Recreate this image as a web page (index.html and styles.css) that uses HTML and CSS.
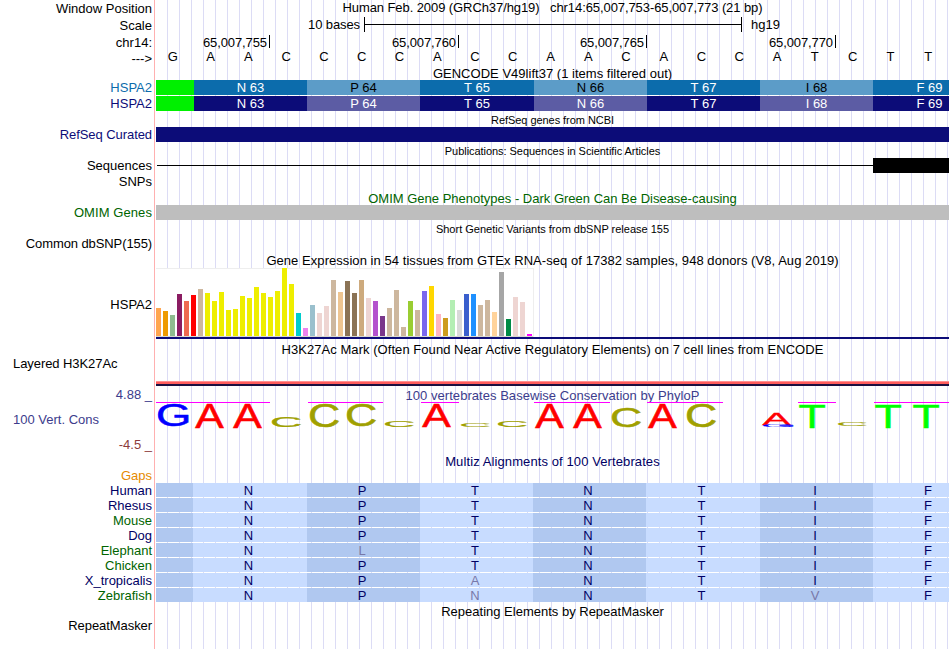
FILE: index.html
```html
<!DOCTYPE html>
<html lang="en">
<head>
    <meta charset="UTF-8">
    <meta name="viewport" content="width=device-width, initial-scale=1.0">
    <title>Human chr14:65,007,753-65,007,773</title>
    <link rel="stylesheet" href="styles.css">
</head>
<body>
    <div class="browser">
        <!-- Left labels -->
        <div class="labels">
            <div class="label window">Window Position</div>
            <div class="label scale-label">Scale</div>
            <div class="label chrom">chr14:</div>
            <div class="label">---&gt;</div>
            <div class="label gencode-top blue">HSPA2</div>
            <div class="label h16 navy">HSPA2</div>
            <div class="label refseq navy">RefSeq Curated</div>
            <div class="label seqs">Sequences</div>
            <div class="label h16">SNPs</div>
            <div class="label omim green">OMIM Genes</div>
            <div class="label dbsnp">Common dbSNP(155)</div>
            <div class="label gtex-label">HSPA2</div>
            <div class="label left h3k">Layered H3K27Ac</div>
            <div class="label cons-max">4.88 _</div>
            <div class="label left cons-name">100 Vert. Cons</div>
            <div class="label cons-min">-4.5 _</div>
            <div class="label gaps">Gaps</div>
            <div class="label navy2">Human</div>
            <div class="label navy2">Rhesus</div>
            <div class="label green">Mouse</div>
            <div class="label navy2">Dog</div>
            <div class="label green">Elephant</div>
            <div class="label green">Chicken</div>
            <div class="label navy2">X_tropicalis</div>
            <div class="label green">Zebrafish</div>
            <div class="label repeat">RepeatMasker</div>
        </div>

        <!-- Track images -->
        <div class="tracks">
            <div class="title position">Human Feb. 2009 (GRCh37/hg19)&nbsp;&nbsp; chr14:65,007,753-65,007,773 (21 bp)</div>
            <div class="scale">
                <span class="scale-text">10 bases</span>
                <span class="scale-bar"></span>
                <span>hg19</span>
            </div>
            <div class="ruler">
                <span class="tick first">65,007,755</span>
                <span class="tick">65,007,760</span>
                <span class="tick short">65,007,765</span>
                <span class="tick">65,007,770</span>
            </div>
            <div class="bases" id="bases"></div>

            <div class="title gencode">GENCODE V49lift37 (1 items filtered out)</div>
            <div class="codons light-blue">
                <span class="start"></span><span>N 63</span><span>P 64</span><span>T 65</span><span>N 66</span><span>T 67</span><span>I 68</span><span>F 69</span>
            </div>
            <div class="codons dark-blue">
                <span class="start"></span><span>N 63</span><span>P 64</span><span>T 65</span><span>N 66</span><span>T 67</span><span>I 68</span><span>F 69</span>
            </div>

            <div class="title small refseq-title">RefSeq genes from NCBI</div>
            <div class="bar navy-bar"></div>
            <div class="title small">Publications: Sequences in Scientific Articles</div>
            <div class="sequence"><span class="thin"></span><span class="block"></span></div>
            <div class="title omim-title green">OMIM Gene Phenotypes - Dark Green Can Be Disease-causing</div>
            <div class="bar gray-bar"></div>
            <div class="title small variants">Short Genetic Variants from dbSNP release 155</div>
            <div class="title gtex-title">Gene Expression in 54 tissues from GTEx RNA-seq of 17382 samples, 948 donors (V8, Aug 2019)</div>
            <div class="gtex" id="gtex"></div>
            <div class="gene-line"></div>

            <div class="title h3k-title">H3K27Ac Mark (Often Found Near Active Regulatory Elements) on 7 cell lines from ENCODE</div>
            <div class="h3k-band"></div>
            <div class="title cons-title">100 vertebrates Basewise Conservation by PhyloP</div>
            <svg class="logo" id="logo" width="793" height="52" viewBox="156 402 793 52"></svg>

            <div class="title multiz-title navy2">Multiz Alignments of 100 Vertebrates</div>
            <div class="multiz" id="multiz"></div>
            <div class="title repeat-title">Repeating Elements by RepeatMasker</div>
        </div>
    </div>
    <script src="script.js"></script>
</body>
</html>
```

FILE: styles.css
```css
body {
    margin: 0;
    background-color: white;
    color: black;
    font-family: "Liberation Sans", Arial, Helvetica, sans-serif;
    font-size: 13px;
}

.browser {
    display: flex;
    width: 950px;
    height: 649px;
    overflow: hidden;
}

/* Left labels */
.labels {
    width: 154px;
    border-right: 1px solid #ffb0b0;
    margin-right: 1px;
    flex-shrink: 0;
}

.label {
    height: 15px;
    line-height: 15px;
    padding-right: 2px;
    text-align: right;
    white-space: nowrap;
}

.label.left {
    text-align: left;
    padding-left: 13px;
}

.h16 { height: 16px; line-height: 16px; }
.window { height: 16px; line-height: 17px; }
.scale-label { height: 17px; line-height: 19px; }
.chrom { padding-top: 1px; height: 17px; line-height: 17px; }
.gencode-top { padding-top: 14px; height: 16px; }
.refseq { padding-top: 15px; letter-spacing: -0.07px; }
.seqs { padding-top: 16px; height: 16px; line-height: 16px; }
.omim { padding-top: 15px; letter-spacing: 0.08px; }
.dbsnp { padding-top: 16px; letter-spacing: -0.1px; }
.gtex-label { padding-top: 46px; }
.h3k { padding-top: 44px; letter-spacing: -0.07px; }
.cons-max { padding-top: 16px; color: #3c3c8c; }
.cons-name { padding-top: 10px; color: #3c3c8c; }
.cons-min { padding-top: 10px; color: #8c3c3c; }
.gaps { padding-top: 16px; color: #e68a00; }
.repeat { padding-top: 15px; letter-spacing: -0.07px; }

.blue { color: #0c6cac; }
.navy { color: #0c0c78; }
.navy2 { color: #000064; }
.green { color: #006400; }

/* Tracks, with a guide line every 12px */
.tracks {
    width: 793px;
    flex-shrink: 0;
    background-image: linear-gradient(to right, transparent 11px, #dcdcf5 11px);
    background-size: 12px 12px;
}

.title {
    height: 16px;
    line-height: 16px;
    text-align: center;
    white-space: nowrap;
}

.position { letter-spacing: -0.085px; }

.small {
    font-size: 11px;
    line-height: 18px;
    letter-spacing: -0.05px;
}

.variants { letter-spacing: 0; }

.scale {
    display: flex;
    height: 17px;
    line-height: 17px;
}

.scale-text {
    width: 204px;
    padding-right: 4px;
    text-align: right;
    letter-spacing: -0.1px;
}

.scale-bar {
    width: 376px;
    height: 15px;
    margin: 1px 9px 0 0;
    border-left: 1px solid black;
    border-right: 1px solid black;
    background: linear-gradient(black, black) 0 7px / 100% 1px no-repeat;
}

.ruler {
    display: flex;
    height: 14px;
    padding-top: 2px;
    line-height: 16px;
}

.tick {
    box-sizing: border-box;
    width: 189px;
    height: 13px;
    padding-right: 2px;
    border-right: 1px solid black;
    text-align: right;
    letter-spacing: -0.1px;
}

.tick.first { width: 114px; }
.tick.short { width: 188px; }

.bases {
    display: grid;
    grid-template-columns: repeat(21, 1fr);
    height: 16px;
    line-height: 16px;
    margin: 0 2px 0 -2px;
    text-align: center;
}

.gencode {
    height: 15px;
    line-height: 17px;
    letter-spacing: 0.02px;
}

/* Codon rows */
.codons {
    display: grid;
    grid-template-columns: 38px 113px 113px 114px 113px 113px 113px 113px;
    height: 15px;
    line-height: 15px;
    margin-bottom: 1px;
    overflow: hidden;
    text-align: center;
    color: white;
}

.light-blue span { background-color: #0c6cac; }
.light-blue span:nth-child(odd) { background-color: #5c9cc8; color: black; }
.dark-blue span { background-color: #0c0c78; }
.dark-blue span:nth-child(odd) { background-color: #5c5ca4; }
.codons .start:nth-child(odd) { background-color: #00f000; }

.refseq-title { height: 15px; line-height: 17px; }

.bar { height: 15px; }
.navy-bar { background-color: #0c0c78; }
.gray-bar { background-color: #bebebe; }

.sequence {
    display: flex;
    align-items: center;
    height: 15px;
    margin-bottom: 16px;
    padding-left: 1px;
}

.thin { width: 716px; height: 1px; background-color: black; }
.block { flex: 1; height: 15px; background-color: black; }
.omim-title { line-height: 20px; }

/* GTEx bar chart */
.gtex-title {
    margin-top: 16px;
    line-height: 18px;
    letter-spacing: 0.055px;
}

.gtex {
    display: flex;
    align-items: flex-end;
    gap: 2px;
    box-sizing: border-box;
    width: 378px;
    height: 69px;
    background-color: white;
    box-shadow: inset -1px 1px #eeeeee, inset 0 -1px #d8d8d0;
    padding-bottom: 1px;
}

.gtex span { width: 5px; }

.gene-line {
    height: 2px;
    background-color: #0c0c78;
}

.h3k-title {
    height: 42px;
    line-height: 22px;
    letter-spacing: 0.05px;
}

.h3k-band {
    height: 2px;
    border-top: 1px solid #ff9090;
    border-bottom: 2px solid #1c1040;
    background-color: #ff5c5c;
}

/* Conservation */
.cons-title {
    line-height: 20px;
    letter-spacing: 0.04px;
    color: #3c3c8c;
}

.logo { display: block; }

.multiz-title {
    height: 29px;
    line-height: 15px;
    letter-spacing: 0.1px;
}

.align-row {
    display: grid;
    grid-template-columns: 37px 114px 113px 113px 113px 114px 113px 113px;
    height: 14px;
    line-height: 15px;
    margin-bottom: 1px;
    overflow: hidden;
    text-align: center;
    color: #000064;
}

.align-row span {
    background-color: #c8dcff;
    padding-right: 3px;
}

.align-row span:nth-child(odd) { background-color: #b0c8f0; }
.align-row .diff { color: #7878a8; }

.repeat-title { line-height: 18px; }
```

FILE: script.js
```js
// Base letters along the window
const sequence = 'GAACCCCACCAACACCATCTT';
document.getElementById('bases').innerHTML =
    sequence.split('').map(b => `<span>${b}</span>`).join('');

// GTEx tissues: [height, color]
const tan = '#cdb79e', yellow = '#eeee00', rose = '#eed5d2';
const tissues = [
    [28, '#ffa54f'], [25, '#ee9a00'], [21, '#8fbc8f'], [42, '#8b1c62'], [35, '#ee6a50'], [41, '#ff0000'],
    [47, tan], [43, yellow], [35, yellow], [44, yellow], [26, yellow], [27, yellow], [40, yellow],
    [38, yellow], [49, yellow], [43, yellow], [39, yellow], [45, yellow], [68, yellow], [52, yellow],
    [23, '#00cdcd'], [8, '#ee82ee'], [31, '#9ac0cd'], [23, rose], [30, rose], [56, tan],
    [44, '#eec591'], [55, '#8b7355'], [43, '#8b7355'], [56, '#cdaa7d'], [38, rose], [35, '#b452cd'],
    [20, '#7a378b'], [28, tan], [46, tan], [9, tan], [35, '#9acd32'], [26, tan], [45, '#7a67ee'],
    [50, '#ffd700'], [22, '#ffb6c1'], [18, '#cd9b1d'], [36, '#b4eeb4'], [26, '#d9d9d9'],
    [42, '#3a5fcd'], [42, '#1e90ff'], [31, tan], [36, tan], [24, '#ffd39b'], [64, '#a6a6a6'],
    [17, '#008b45'], [39, rose], [34, rose], [2, '#ff00ff']
];
document.getElementById('gtex').innerHTML =
    tissues.map(t => `<span style="height:${t[0]}px;background-color:${t[1]}"></span>`).join('');

// Sequence logo: [letter, left, right, top, bottom]
const letters = [
    ['G', 158, 189, 404, 427], ['A', 195, 224, 404, 428], ['A', 233, 262, 404, 428],
    ['C', 272, 301, 416, 427], ['C', 310, 339, 404, 428], ['C', 347, 376, 404, 427],
    ['C', 385, 414, 421, 427], ['A', 422, 451, 404, 427], ['C', 461, 490, 423, 427],
    ['C', 498, 527, 421, 427], ['A', 535, 564, 404, 428], ['A', 573, 602, 404, 428],
    ['C', 612, 641, 407, 427], ['A', 648, 677, 404, 428], ['C', 687, 716, 404, 428],
    ['A', 762, 791, 414, 425], ['G', 763, 794, 425, 427], ['T', 799, 825, 404, 428],
    ['C', 838, 867, 422, 426], ['T', 875, 901, 404, 428], ['T', 913, 939, 404, 428]
];
// Ink box of each letter at 100px: left, right, height, descent
const ink = {
    A: [-0.6, 67.3, 69.6, 0.8, '#ff0000'],
    C: [4.2, 69.1, 72.4, 1.8, '#a0a000'],
    G: [4.2, 72.4, 72.4, 1.8, '#0000ff'],
    T: [1.4, 59.7, 70.4, 0.8, '#00ff00']
};
const clipped = [[156, 270], [308, 383], [421, 459], [534, 610], [647, 723], [798, 836], [874, 949]];
let logo = clipped.map(c =>
    `<rect x="${c[0]}" y="402" width="${c[1] - c[0]}" height="1" fill="#ff00ff"/>`).join('');
letters.forEach(([ch, x0, x1, y0, y1]) => {
    const [l, r, h, d, color] = ink[ch];
    const sx = (x1 - x0) / (r - l);
    const sy = (y1 - y0) / h;
    logo += `<text font-size="100" fill="${color}" stroke="${color}" stroke-width="1.6" transform="translate(${x0 - l * sx} ${y1 - d * sy}) scale(${sx} ${sy})">${ch}</text>`;
});
document.getElementById('logo').innerHTML = logo;

// Alignment rows, one per species; lower case marks a changed residue
const rows = ['NPTNTIF', 'NPTNTIF', 'NPTNTIF', 'NPTNTIF', 'NlTNTIF', 'NPTNTIF', 'NPaNTIF', 'NPnNTvF'];
document.getElementById('multiz').innerHTML = rows.map(row =>
    '<div class="align-row"><span></span>' + row.split('').map(c =>
        c === c.toUpperCase() ? `<span>${c}</span>` : `<span class="diff">${c.toUpperCase()}</span>`
    ).join('') + '</div>').join('');
```
